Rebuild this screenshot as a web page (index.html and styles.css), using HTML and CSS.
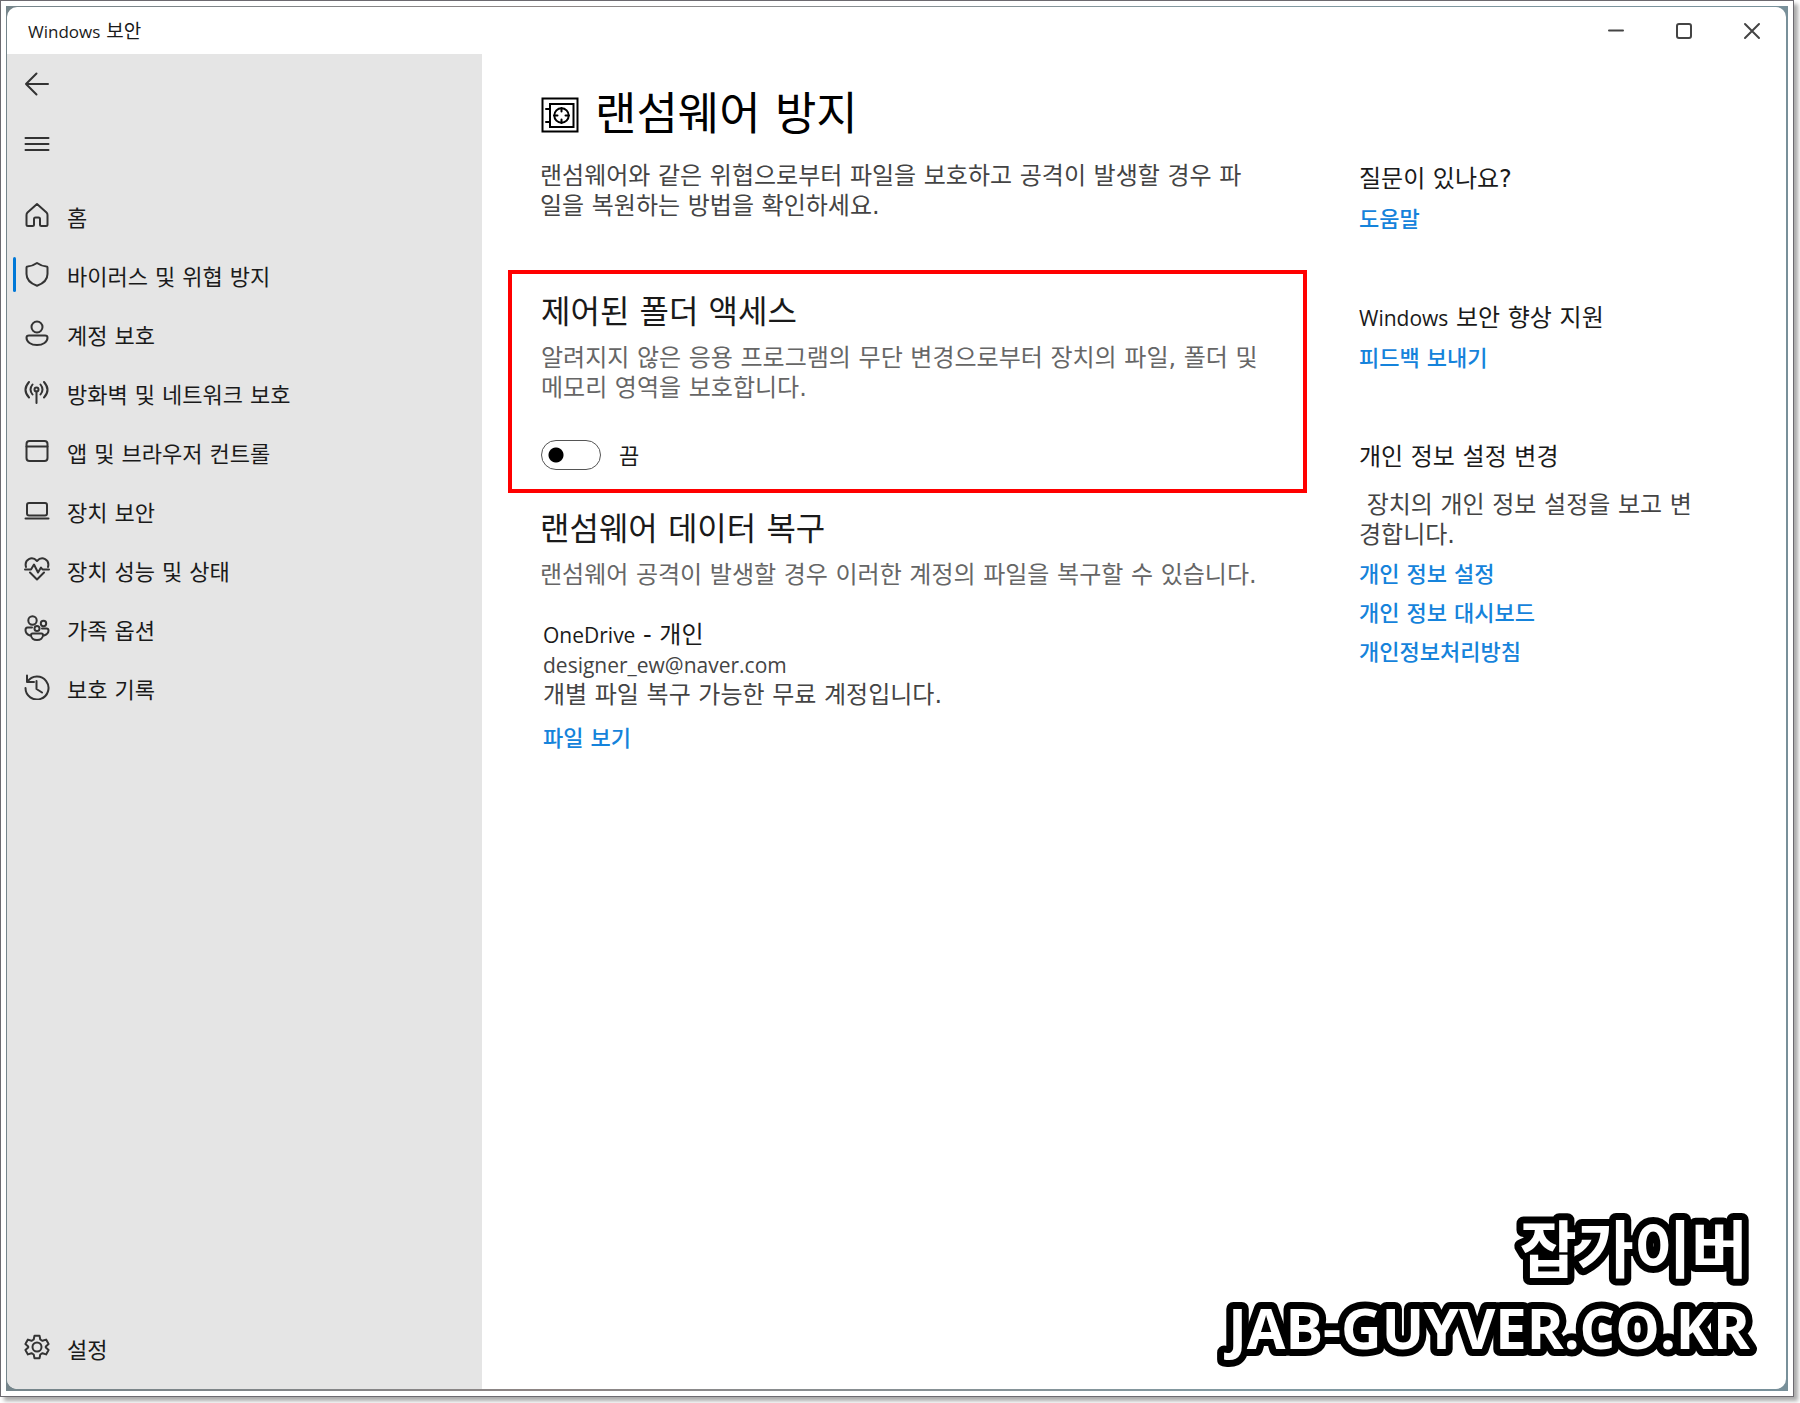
FILE: index.html
```html
<!DOCTYPE html>
<html lang="ko">
<head>
<meta charset="utf-8">
<meta name="viewport" content="width=device-width, initial-scale=1">
<title>Windows 보안</title>
<link rel="stylesheet" href="styles.css">
</head>
<body>
<div class="frame">
<div class="desktop">
<div class="window">
  <header class="titlebar">
    <span class="title"><span class="title-latin">Windows</span> 보안</span>
    <div class="controls">
      <button type="button" class="control" aria-label="최소화"><svg width="18" height="18" viewBox="0 0 18 18"><path d="M2 8.500h14"/></svg></button>
      <button type="button" class="control" aria-label="최대화"><svg width="18" height="18" viewBox="0 0 18 18"><rect x="2" y="2" width="14" height="14" rx="2"/></svg></button>
      <button type="button" class="control" aria-label="닫기"><svg width="18" height="18" viewBox="0 0 18 18"><path d="M2 2l14 14M16 2L2 16"/></svg></button>
    </div>
  </header>
  <div class="body">
    <aside class="sidebar">
      <button type="button" class="tool" aria-label="뒤로"><svg class="icon" viewBox="0 0 26 26"><path d="M12.500 2.500L2 13l10.500 10.500M2 13h22"/></svg></button>
      <button type="button" class="tool" aria-label="메뉴"><svg class="icon" viewBox="0 0 26 26"><path d="M1.500 7h23M1.500 13h23M1.500 19h23"/></svg></button>
      <nav class="nav">
        <a href="#" class="item"><svg class="icon" viewBox="0 0 26 26"><path d="M13 2L3.500 10.500Q2.500 11.500 2.500 13v9.500Q2.500 24 4 24h4.500q1.500 0 1.500-1.500V17q0-1.500 1.500-1.500h3q1.500 0 1.500 1.500v5.500q0 1.500 1.500 1.500H22q1.500 0 1.500-1.500V13q0-1.500-1-2.500z"/></svg><span>홈</span></a>
        <a href="#" class="item current" aria-current="page"><svg class="icon" viewBox="0 0 26 26"><path d="M13 2q4.500 3.200 9.500 3.400 1 0 1 1V13q0 8-10.500 11.800Q2.500 21 2.500 13V6.400q0-1 1-1Q8.500 5.200 13 2z"/></svg><span>바이러스 및 위협 방지</span></a>
        <a href="#" class="item"><svg class="icon" viewBox="0 0 26 26"><circle cx="13" cy="7" r="5.500"/><path d="M5 15.500h16q2.500 0 2.500 2.300C23.500 22 19 25 13 25S2.500 22 2.500 17.800q0-2.300 2.500-2.300z"/></svg><span>계정 보호</span></a>
        <a href="#" class="item"><svg class="icon" viewBox="0 0 26 26"><circle cx="12.500" cy="10.500" r="2"/><path d="M12.500 12.500V24M8.500 5.500q-4 5 0 10M16.500 5.500q4 5 0 10M5 3q-7 8 0 15.500M20 3q7 8 0 15.500"/></svg><span>방화벽 및 네트워크 보호</span></a>
        <a href="#" class="item"><svg class="icon" viewBox="0 0 26 26"><rect x="2.500" y="3" width="21" height="20" rx="3"/><path d="M2.500 8.500h21"/></svg><span>앱 및 브라우저 컨트롤</span></a>
        <a href="#" class="item"><svg class="icon" viewBox="0 0 26 26"><rect x="3" y="6" width="20" height="12.500" rx="2"/><path d="M1.500 21.500h23"/></svg><span>장치 보안</span></a>
        <a href="#" class="item"><svg class="icon" viewBox="0 0 26 26"><path d="M2 11C0 3.500 8-.500 13 5c5-5.500 13-1.500 11 6M1 13.500h6l3-5 4 8 3-5 1.500 2H25M6 16.500l7 7 7-7"/></svg><span>장치 성능 및 상태</span></a>
        <a href="#" class="item"><svg class="icon" viewBox="0 0 26 26"><circle cx="8.500" cy="5.500" r="4.200"/><circle cx="19.500" cy="8.500" r="2.700"/><circle cx="13" cy="13.500" r="2.500"/><path d="M8 12.500H3.500q-2 0-2 2.500 0 4 4.500 5.500M18 13.500h4.500q2 0 2 2 0 3.500-4.500 5M8.500 18.500h9q1.500 0 1.500 1.500c0 3-2.500 5-6 5s-6-2-6-5q0-1.500 1.500-1.500z"/></svg><span>가족 옵션</span></a>
        <a href="#" class="item"><svg class="icon" viewBox="0 0 26 26"><path d="M3 1.500v6.500h7M3.500 7.500A11.500 11.500 0 1 1 1.500 14M12.500 7v8l5.500 3.500"/></svg><span>보호 기록</span></a>
      </nav>
      <a href="#" class="item settings"><svg class="icon" viewBox="0 0 26 26"><circle cx="13" cy="13" r="4.500"/><path d="M10.500 1.800h5l.800 3.700 2.200 1.300 3.600-1.200 2.500 4.300-2.800 2.500v1.200l2.800 2.500-2.500 4.300-3.600-1.200-2.200 1.300-.800 3.700h-5l-.800-3.700-2.200-1.300-3.600 1.200-2.500-4.300 2.800-2.500v-1.200L1.400 9.900l2.500-4.300 3.600 1.200 2.200-1.300z"/></svg><span>설정</span></a>
    </aside>
    <main class="content">
      <div class="primary">
        <div class="inset">
          <h1><svg class="safe" viewBox="0 0 38 36"><path d="M1.500 1.500h35v33h-35zM9 7h23.500v23H9zM5 12h4M5 25h4"/><circle cx="20.500" cy="18.500" r="7.200"/><path d="M20.500 11v3.500M20.500 22.500V26M13 18.500h3.500M24.500 18.500H28"/></svg>랜섬웨어 방지</h1>
          <p class="intro">랜섬웨어와 같은 위협으로부터 파일을 보호하고 공격이 발생할 경우 파일을 복원하는 방법을 확인하세요.</p>
        </div>
        <section class="highlight">
          <h2>제어된 폴더 액세스</h2>
          <p class="muted">알려지지 않은 응용 프로그램의 무단 변경으로부터 장치의 파일, 폴더 및 메모리 영역을 보호합니다.</p>
          <label class="switch"><input type="checkbox" role="switch"><span>끔</span></label>
        </section>
        <section class="inset">
          <h2>랜섬웨어 데이터 복구</h2>
          <p class="muted">랜섬웨어 공격이 발생할 경우 이러한 계정의 파일을 복구할 수 있습니다.</p>
          <div class="account">
            <h3><span class="latin">OneDrive</span> - 개인</h3>
            <p><span class="latin">designer_ew@naver.com</span></p>
            <p>개별 파일 복구 가능한 무료 계정입니다.</p>
            <a href="#">파일 보기</a>
          </div>
        </section>
      </div>
      <aside class="related">
        <section>
          <h3>질문이 있나요?</h3>
          <a href="#">도움말</a>
        </section>
        <section>
          <h3><span class="latin">Windows</span> 보안 향상 지원</h3>
          <a href="#">피드백 보내기</a>
        </section>
        <section>
          <h3>개인 정보 설정 변경</h3>
          <p>&nbsp;장치의 개인 정보 설정을 보고 변경합니다.</p>
          <a href="#">개인 정보 설정</a>
          <a href="#">개인 정보 대시보드</a>
          <a href="#">개인정보처리방침</a>
        </section>
      </aside>
    </main>
  </div>
</div>
<svg class="watermark" viewBox="0 0 600 190"><text class="mark-name" x="580" y="72">잡가이버</text><text class="mark-site" x="582" y="148">JAB-GUYVER.CO.KR</text></svg>
</div>
</div>
</body>
</html>
```
FILE: styles.css
```css
* { box-sizing: border-box; }
body {
  margin: 0;
  min-height: 100vh;
  padding: 0 6px 6px 0;
  display: flex;
  background: #fff;
  color: #1a1a1a;
  font: 24px/30px "DejaVu Sans", "Noto Sans CJK KR", sans-serif;
}
h1, h2, h3, p { margin: 0; font-weight: 400; }
a { color: #1583db; text-decoration: none; }
button { border: 0; padding: 0; background: none; color: inherit; }
svg { fill: none; stroke: currentColor; stroke-linecap: round; stroke-linejoin: round; flex: none; }

.frame {
  flex: 1;
  display: flex;
  padding: 5px;
  border: 1px solid #6c6a70;
  background: #fff;
  box-shadow: 4px 4px 4px #aaa;
}
.desktop {
  position: relative;
  flex: 1;
  display: flex;
  padding: 1px 2px 2px 1px;
  background: linear-gradient(90deg, #75858b, #8d8584 30%, #829aa2 70%, #78909a);
}
.window {
  flex: 1;
  min-width: 0;
  display: flex;
  flex-direction: column;
  overflow: hidden;
  border-radius: 10px;
  background: #fff;
}

.titlebar { display: flex; justify-content: space-between; height: 47px; padding-left: 21px; }
.title { align-self: center; padding-top: 2px; font-size: 19px; }
.title-latin { font-family: "Open Sans", sans-serif; font-size: 17px; }
.controls { display: flex; }
.control { width: 68px; display: grid; place-items: center; color: #444; }
.control svg { stroke-width: 2; }

.body { flex: 1; display: flex; }
.sidebar {
  flex: 0 0 475px;
  display: flex;
  flex-direction: column;
  background: #e5e5e5;
  font-size: 22px;
}
.icon { width: 26px; height: 26px; stroke-width: 2; color: #333; }
.tool { height: 60px; padding-left: 17px; display: flex; align-items: center; }
.nav { padding-top: 12px; }
.item {
  position: relative;
  height: 59px;
  padding-left: 17px;
  display: flex;
  align-items: center;
  gap: 17px;
  color: #1a1a1a;
}
.item .icon { margin-bottom: 2px; }
.item span { padding-top: 6px; }
.current::before {
  content: "";
  position: absolute;
  left: 6px;
  top: 12px;
  width: 3px;
  height: 35px;
  border-radius: 2px;
  background: #0078d7;
}
.settings { margin: auto 0 12px; }

.content {
  flex: 1;
  min-width: 0;
  display: grid;
  grid-template-columns: minmax(0, 799px) minmax(0, 345px);
  column-gap: 52px;
  align-content: start;
  padding: 31px 26px;
}
.inset { padding: 0 32px; }
h1 { display: flex; align-items: center; gap: 16px; font-size: 45px; line-height: 60px; color: #000; }
.safe { width: 38px; height: 36px; margin-left: 1px; stroke-width: 2; stroke-linejoin: miter; }
h2 { font-size: 32px; line-height: 40px; }
.intro, .muted { max-width: 720px; color: #444; }
.intro { margin: 16px 0 49px; }
.muted { margin-top: 11px; color: #666; }
.highlight { border: 4px solid #f00; padding: 18px 28px 17px 29px; margin-bottom: 16px; }
.switch { display: flex; width: max-content; align-items: center; gap: 18px; margin-top: 35px; font-size: 22px; }
.switch input {
  appearance: none;
  width: 60px;
  height: 30px;
  margin: 0;
  border: 1px solid #555;
  border-radius: 15px;
  background: radial-gradient(circle at 14px 14px, #000 7px, transparent 8px);
}
.switch span { padding-top: 4px; }
.latin { font-family: "Open Sans", sans-serif; font-size: 21px; }
.account { margin-top: 30px; padding-left: 3px; color: #444; }
.account h3, .related h3 { font-size: 24px; color: #1a1a1a; }
.account a, .related a { display: block; width: max-content; font-size: 22px; font-weight: 500; }
.account a { margin-top: 14px; }

.related { padding-top: 79px; display: flex; flex-direction: column; gap: 68px; }
.related section { display: grid; row-gap: 9px; }
.related h3 { margin-bottom: 2px; }
.related p { margin: 7px 0 1px; color: #444; }

.watermark {
  position: absolute;
  right: 20px;
  bottom: 0;
  width: 600px;
  height: 190px;
  fill: #fff;
  stroke: #000;
  stroke-width: 14px;
  paint-order: stroke fill;
  text-anchor: end;
}
.mark-name { font: 700 62px "Noto Sans CJK KR", sans-serif; }
.mark-site { font: 700 56px "Open Sans", sans-serif; }
```
